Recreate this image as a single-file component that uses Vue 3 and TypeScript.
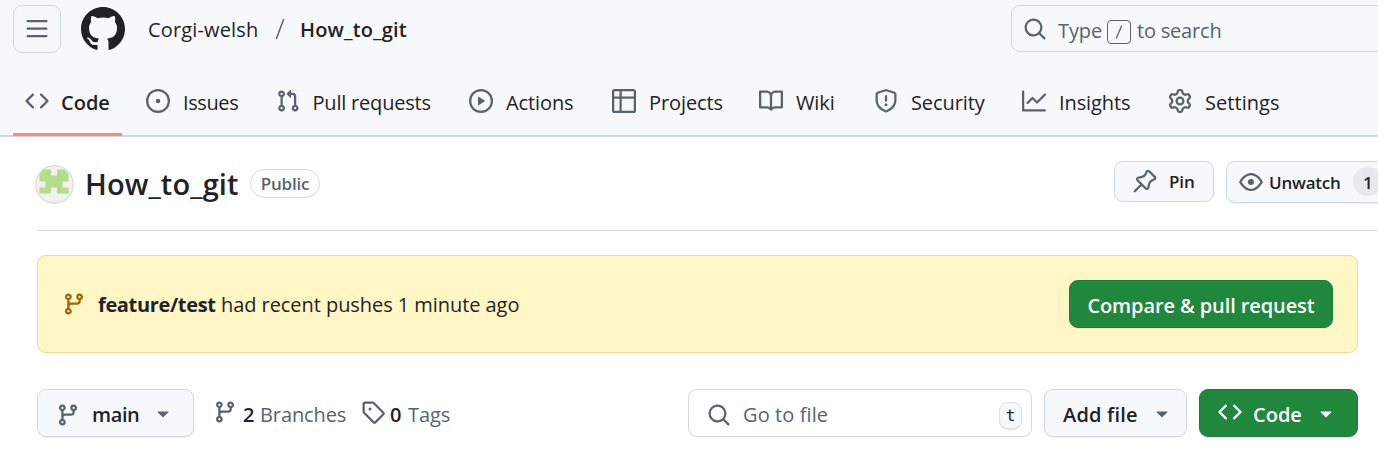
<script setup lang="ts">
interface Tab {
  label: string
  icon: string
  active?: boolean
}

const icons: Record<string, string> = {
  code: 'M4.72 3.22a.75.75 0 0 1 1.06 1.06L2.06 8l3.72 3.72a.75.75 0 1 1-1.06 1.06L.47 8.53a.75.75 0 0 1 0-1.06Zm6.56 0a.75.75 0 1 0-1.06 1.06L13.94 8l-3.72 3.72a.75.75 0 1 0 1.06 1.06l4.25-4.25a.75.75 0 0 0 0-1.06Z',
  issue: 'M8 9.5a1.5 1.5 0 1 0 0-3 1.5 1.5 0 0 0 0 3Z M8 0a8 8 0 1 1 0 16A8 8 0 0 1 8 0ZM1.5 8a6.5 6.5 0 1 0 13 0 6.5 6.5 0 0 0-13 0Z',
  pull: 'M1.5 3.25a2.25 2.25 0 1 1 3 2.122v5.256a2.251 2.251 0 1 1-1.5 0V5.372A2.25 2.25 0 0 1 1.5 3.25Zm5.677-.177L9.573.677A.25.25 0 0 1 10 .854V2.5h1A2.5 2.5 0 0 1 13.5 5v5.628a2.251 2.251 0 1 1-1.5 0V5a1 1 0 0 0-1-1h-1v1.646a.25.25 0 0 1-.427.177L7.177 3.427a.25.25 0 0 1 0-.354ZM3.75 2.5a.75.75 0 1 0 0 1.5.75.75 0 0 0 0-1.5Zm0 9.5a.75.75 0 1 0 0 1.5.75.75 0 0 0 0-1.5Zm8.25.75a.75.75 0 1 0 1.5 0 .75.75 0 0 0-1.5 0Z',
  play: 'M8 0a8 8 0 1 1 0 16A8 8 0 0 1 8 0ZM1.5 8a6.5 6.5 0 1 0 13 0 6.5 6.5 0 0 0-13 0Zm4.879-2.773 4.264 2.559a.25.25 0 0 1 0 .428l-4.264 2.559A.25.25 0 0 1 6 10.559V5.442a.25.25 0 0 1 .379-.215Z',
  table: 'M0 1.75C0 .784.784 0 1.75 0h12.5C15.216 0 16 .784 16 1.75v12.5A1.75 1.75 0 0 1 14.25 16H1.75A1.75 1.75 0 0 1 0 14.25ZM6.5 6.5v8h7.75a.25.25 0 0 0 .25-.25V6.5Zm8-1.5V1.75a.25.25 0 0 0-.25-.25H6.5V5Zm-13 1.5v7.75c0 .138.112.25.25.25H5v-8ZM5 5V1.5H1.75a.25.25 0 0 0-.25.25V5Z',
  book: 'M0 1.75A.75.75 0 0 1 .75 1h4.253c1.227 0 2.317.59 3 1.501A3.743 3.743 0 0 1 11.006 1h4.245a.75.75 0 0 1 .75.75v10.5a.75.75 0 0 1-.75.75h-4.507a2.25 2.25 0 0 0-1.591.659l-.622.621a.75.75 0 0 1-1.06 0l-.622-.621A2.25 2.25 0 0 0 5.258 13H.75a.75.75 0 0 1-.75-.75Zm7.251 10.324.004-5.073-.002-2.253A2.25 2.25 0 0 0 5.003 2.5H1.5v9h3.757a3.75 3.75 0 0 1 1.994.574ZM8.755 4.75l-.004 7.322a3.752 3.752 0 0 1 1.992-.572H14.5v-9h-3.495a2.25 2.25 0 0 0-2.25 2.25Z',
  shield: 'M7.467.133a1.748 1.748 0 0 1 1.066 0l5.25 1.68A1.75 1.75 0 0 1 15 3.48V7c0 1.566-.32 3.182-1.303 4.682-.983 1.498-2.585 2.813-5.032 3.855a1.697 1.697 0 0 1-1.33 0c-2.447-1.042-4.049-2.357-5.032-3.855C1.32 10.182 1 8.566 1 7V3.48a1.75 1.75 0 0 1 1.217-1.667Zm.61 1.429a.25.25 0 0 0-.153 0l-5.25 1.68a.25.25 0 0 0-.174.238V7c0 1.358.275 2.666 1.057 3.86.784 1.194 2.121 2.34 4.366 3.297a.196.196 0 0 0 .154 0c2.245-.956 3.582-2.104 4.366-3.298C13.225 9.666 13.5 8.36 13.5 7V3.48a.251.251 0 0 0-.174-.237l-5.25-1.68ZM8.75 4.75v3a.75.75 0 0 1-1.5 0v-3a.75.75 0 0 1 1.5 0ZM9 10.5a1 1 0 1 1-2 0 1 1 0 0 1 2 0Z',
  graph: 'M1.5 1.75V13.5h13.75a.75.75 0 0 1 0 1.5H.75a.75.75 0 0 1-.75-.75V1.75a.75.75 0 0 1 1.5 0Zm14.28 2.53-5.25 5.25a.75.75 0 0 1-1.06 0L7 7.06 4.28 9.78a.751.751 0 0 1-1.042-.018.751.751 0 0 1-.018-1.042l3.25-3.25a.75.75 0 0 1 1.06 0L10 7.94l4.72-4.72a.751.751 0 0 1 1.042.018.751.751 0 0 1 .018 1.042Z',
  gear: 'M8 0a8.2 8.2 0 0 1 .701.031C9.444.095 9.99.645 10.16 1.29l.288 1.107c.018.066.079.158.212.224.231.114.454.243.668.386.123.082.233.09.299.071l1.103-.303c.644-.176 1.392.021 1.82.63.27.385.506.792.704 1.218.315.675.111 1.422-.364 1.891l-.814.806c-.049.048-.098.147-.088.294.016.257.016.515 0 .772-.01.147.038.246.088.294l.814.806c.475.469.679 1.216.364 1.891a7.977 7.977 0 0 1-.704 1.217c-.428.61-1.176.807-1.82.63l-1.102-.302c-.067-.019-.177-.011-.3.071a5.909 5.909 0 0 1-.668.386c-.133.066-.194.158-.211.224l-.29 1.106c-.168.646-.715 1.196-1.458 1.26a8.006 8.006 0 0 1-1.402 0c-.743-.064-1.289-.614-1.458-1.26l-.289-1.106c-.018-.066-.079-.158-.212-.224a5.738 5.738 0 0 1-.668-.386c-.123-.082-.233-.09-.299-.071l-1.103.303c-.644.176-1.392-.021-1.82-.63a8.12 8.12 0 0 1-.704-1.218c-.315-.675-.111-1.422.363-1.891l.815-.806c.05-.048.098-.147.088-.294a6.214 6.214 0 0 1 0-.772c.01-.147-.038-.246-.088-.294l-.815-.806C.635 6.045.431 5.298.746 4.623a7.92 7.92 0 0 1 .704-1.217c.428-.61 1.176-.807 1.82-.63l1.102.302c.067.019.177.011.3-.071.214-.143.437-.272.668-.386.133-.066.194-.158.211-.224l.29-1.106C6.009.645 6.556.095 7.299.03 7.53.01 7.764 0 8 0Zm-.571 1.525c-.036.003-.108.036-.137.146l-.289 1.105c-.147.561-.549.967-.998 1.189-.173.086-.34.183-.5.29-.417.278-.97.423-1.529.27l-1.103-.303c-.109-.03-.175.016-.195.045-.22.312-.412.644-.573.99-.014.031-.021.11.059.19l.815.806c.411.406.562.957.53 1.456a4.709 4.709 0 0 0 0 .582c.032.499-.119 1.05-.53 1.456l-.815.806c-.081.08-.073.159-.059.19.162.346.353.677.573.989.02.03.085.076.195.046l1.102-.303c.56-.153 1.113-.008 1.53.27.161.107.328.204.501.29.447.222.85.629.997 1.189l.289 1.105c.029.109.101.143.137.146a6.6 6.6 0 0 0 1.142 0c.036-.003.108-.036.137-.146l.289-1.105c.147-.561.549-.967.998-1.189.173-.086.34-.183.5-.29.417-.278.97-.423 1.529-.27l1.103.303c.109.029.175-.016.195-.045.22-.313.411-.644.573-.99.014-.031.021-.11-.059-.19l-.815-.806c-.411-.406-.562-.957-.53-1.456a4.709 4.709 0 0 0 0-.582c-.032-.499.119-1.05.53-1.456l.815-.806c.081-.08.073-.159.059-.19a6.464 6.464 0 0 0-.573-.989c-.02-.03-.085-.076-.195-.046l-1.102.303c-.56.153-1.113.008-1.53-.27a4.44 4.44 0 0 0-.501-.29c-.447-.222-.85-.629-.997-1.189l-.289-1.105c-.029-.11-.101-.143-.137-.146a6.6 6.6 0 0 0-1.142 0ZM11 8a3 3 0 1 1-6 0 3 3 0 0 1 6 0ZM9.5 8a1.5 1.5 0 1 0-3.001.001A1.5 1.5 0 0 0 9.5 8Z',
  search: 'M10.68 11.74a6 6 0 0 1-7.922-8.982 6 6 0 0 1 8.982 7.922l3.04 3.04a.749.749 0 0 1-.326 1.275.749.749 0 0 1-.734-.215ZM11.5 7a4.499 4.499 0 1 0-8.997 0A4.499 4.499 0 0 0 11.5 7Z',
  menu: 'M1 2.75A.75.75 0 0 1 1.75 2h12.5a.75.75 0 0 1 0 1.5H1.75A.75.75 0 0 1 1 2.75Zm0 5A.75.75 0 0 1 1.75 7h12.5a.75.75 0 0 1 0 1.5H1.75A.75.75 0 0 1 1 7.75ZM1.75 12h12.5a.75.75 0 0 1 0 1.5H1.75a.75.75 0 0 1 0-1.5Z',
  mark: 'M8 0c4.42 0 8 3.58 8 8a8.013 8.013 0 0 1-5.45 7.59c-.4.08-.55-.17-.55-.38 0-.27.01-1.13.01-2.2 0-.75-.25-1.23-.54-1.48 1.78-.2 3.65-.88 3.65-3.95 0-.88-.31-1.59-.82-2.15.08-.2.36-1.02-.08-2.12 0 0-.67-.22-2.2.82-.64-.18-1.32-.27-2-.27-.68 0-1.36.09-2 .27-1.53-1.03-2.2-.82-2.2-.82-.44 1.1-.16 1.92-.08 2.12-.51.56-.82 1.28-.82 2.15 0 3.06 1.86 3.75 3.64 3.95-.23.2-.44.55-.51 1.07-.46.21-1.61.55-2.33-.66-.15-.24-.6-.83-1.23-.82-.67.01-.27.38.01.53.34.19.73.9.82 1.13.16.45.68 1.31 2.69.94 0 .67.01 1.3.01 1.49 0 .21-.15.45-.55.38A7.995 7.995 0 0 1 0 8c0-4.42 3.58-8 8-8Z',
  branch: 'M9.5 3.25a2.25 2.25 0 1 1 3 2.122V6A2.5 2.5 0 0 1 10 8.5H6a1 1 0 0 0-1 1v1.128a2.251 2.251 0 1 1-1.5 0V5.372a2.25 2.25 0 1 1 1.5 0v1.836A2.493 2.493 0 0 1 6 7h4a1 1 0 0 0 1-1v-.628A2.25 2.25 0 0 1 9.5 3.25Zm-6 0a.75.75 0 1 0 1.5 0 .75.75 0 0 0-1.5 0Zm8.25-.75a.75.75 0 1 0 0 1.5.75.75 0 0 0 0-1.5ZM4.25 12a.75.75 0 1 0 0 1.5.75.75 0 0 0 0-1.5Z',
  tag: 'M1 7.775V2.75C1 1.784 1.784 1 2.75 1h5.025c.464 0 .91.184 1.238.513l6.25 6.25a1.75 1.75 0 0 1 0 2.474l-5.026 5.026a1.75 1.75 0 0 1-2.474 0l-6.25-6.25A1.752 1.752 0 0 1 1 7.775Zm1.5 0c0 .066.026.13.073.177l6.25 6.25a.25.25 0 0 0 .354 0l5.025-5.025a.25.25 0 0 0 0-.354l-6.25-6.25a.25.25 0 0 0-.177-.073H2.75a.25.25 0 0 0-.25.25ZM6 5a1 1 0 1 1 0 2 1 1 0 0 1 0-2Z',
  eye: 'M8 2c1.981 0 3.671.992 4.933 2.078 1.27 1.091 2.187 2.345 2.637 3.023a1.62 1.62 0 0 1 0 1.798c-.45.678-1.367 1.932-2.637 3.023C11.67 13.008 9.981 14 8 14c-1.981 0-3.671-.992-4.933-2.078C1.797 10.83.88 9.576.43 8.898a1.62 1.62 0 0 1 0-1.798c.45-.677 1.367-1.931 2.637-3.022C4.33 2.992 6.019 2 8 2ZM1.679 7.932a.12.12 0 0 0 0 .136c.411.622 1.241 1.75 2.366 2.717C5.176 11.758 6.527 12.5 8 12.5c1.473 0 2.825-.742 3.955-1.715 1.124-.967 1.954-2.096 2.366-2.717a.12.12 0 0 0 0-.136c-.412-.621-1.242-1.75-2.366-2.717C10.824 4.242 9.473 3.5 8 3.5c-1.473 0-2.825.742-3.955 1.715-1.124.967-1.954 2.096-2.366 2.717ZM8 10a2 2 0 1 1-.001-3.999A2 2 0 0 1 8 10Z',
  pin: 'm11.294.984 3.722 3.722a1.75 1.75 0 0 1-.504 2.826l-1.327.613a3.089 3.089 0 0 0-1.707 2.084l-.584 2.454c-.317 1.332-1.972 1.8-2.94.832L5.75 11.311 1.78 15.28a.749.749 0 1 1-1.06-1.06l3.969-3.97-2.204-2.204c-.968-.968-.5-2.623.832-2.94l2.454-.584a3.08 3.08 0 0 0 2.084-1.707l.613-1.327a1.75 1.75 0 0 1 2.826-.504ZM6.283 9.723l2.732 2.731a.25.25 0 0 0 .42-.119l.584-2.454a4.586 4.586 0 0 1 2.537-3.098l1.328-.613a.25.25 0 0 0 .072-.404l-3.722-3.722a.25.25 0 0 0-.404.072l-.613 1.328a4.584 4.584 0 0 1-3.098 2.537l-2.454.584a.25.25 0 0 0-.119.42l2.731 2.732Z',
  caret: 'm4.427 7.427 3.396 3.396a.25.25 0 0 0 .354 0l3.396-3.396A.25.25 0 0 0 11.396 7H4.604a.25.25 0 0 0-.177.427Z',
}

const tabs: Tab[] = [
  { label: 'Code', icon: 'code', active: true },
  { label: 'Issues', icon: 'issue' },
  { label: 'Pull requests', icon: 'pull' },
  { label: 'Actions', icon: 'play' },
  { label: 'Projects', icon: 'table' },
  { label: 'Wiki', icon: 'book' },
  { label: 'Security', icon: 'shield' },
  { label: 'Insights', icon: 'graph' },
  { label: 'Settings', icon: 'gear' },
]
</script>

<template>
  <div class="page">
    <header class="header">
      <div class="topbar">
        <button class="menu"><svg class="icon" viewBox="0 0 16 16"><path :d="icons.menu" /></svg></button>
        <svg class="mark" viewBox="0 0 16 16"><path :d="icons.mark" /></svg>
        <div class="crumbs">
          <span class="owner">Corgi-welsh</span>
          <svg class="slash" viewBox="0 0 10 22"><path d="M8.7 1 1.3 21" /></svg>
          <span class="repo">How_to_git</span>
        </div>
        <div class="search">
          <svg class="icon" viewBox="0 0 16 16"><path :d="icons.search" /></svg>
          <span class="type">Type</span>
          <span class="key"><svg viewBox="0 0 8 14"><path d="M6.8.5 1.2 13.5" /></svg></span>
          <span class="hint">to search</span>
        </div>
      </div>
      <nav class="tabs">
        <a v-for="tab in tabs" :key="tab.label" class="tab" :class="{ active: tab.active }">
          <svg class="icon" viewBox="0 0 16 16"><path :d="icons[tab.icon]" /></svg>
          <span>{{ tab.label }}</span>
        </a>
      </nav>
    </header>

    <main>
      <section class="title-row">
        <svg class="avatar" viewBox="0 0 39 39">
          <circle cx="19.5" cy="19.5" r="18.8" fill="#f0f0f0" stroke="#dcdcde" stroke-width="1.2" />
          <path fill="#b6dc8a" d="M8 4.500H16v6h6v-6h7.500l4 5v7h-6v6h6v6H22v-6h-6v6H4.500v-6h6v-6h-6v-7Z" />
        </svg>
        <h1>How_to_git</h1>
        <span class="badge">Public</span>
        <button class="small pin"><svg class="icon" viewBox="0 0 16 16"><path :d="icons.pin" /></svg><span>Pin</span></button>
        <button class="small watch">
          <svg class="icon" viewBox="0 0 16 16"><path :d="icons.eye" /></svg>
          <span>Unwatch</span><span class="count">1</span>
        </button>
      </section>

      <section class="notice">
        <svg class="icon" viewBox="0 0 16 16"><path :d="icons.branch" /></svg>
        <p><strong>feature/test</strong><span>had recent pushes 1 minute ago</span></p>
        <button class="btn green compare"><span>Compare &amp; pull request</span></button>
      </section>

      <section class="tools">
        <button class="btn ref">
          <svg class="icon" viewBox="0 0 16 16"><path :d="icons.branch" /></svg>
          <span>main</span>
          <svg class="icon" viewBox="0 0 16 16"><path :d="icons.caret" /></svg>
        </button>
        <a class="stat branches"><svg class="icon" viewBox="0 0 16 16"><path :d="icons.branch" /></svg><b>2</b><span>Branches</span></a>
        <a class="stat tags"><svg class="icon" viewBox="0 0 16 16"><path :d="icons.tag" /></svg><b>0</b><span>Tags</span></a>
        <div class="file">
          <svg class="icon" viewBox="0 0 16 16"><path :d="icons.search" /></svg>
          <span>Go to file</span>
          <kbd>t</kbd>
        </div>
        <button class="btn add"><span>Add file</span><svg class="icon" viewBox="0 0 16 16"><path :d="icons.caret" /></svg></button>
        <button class="btn green clone">
          <svg class="icon" viewBox="0 0 16 16"><path :d="icons.code" /></svg>
          <span>Code</span>
          <svg class="icon" viewBox="0 0 16 16"><path :d="icons.caret" /></svg>
        </button>
      </section>
    </main>
  </div>
</template>

<style>
body { margin: 0; overflow: hidden; background: #fff; }
</style>

<style scoped>
* { box-sizing: border-box; }
.page {
  width: 1378px;
  height: 454px;
  overflow: hidden;
  color: #1f2328;
  font: 20px/30px "Open Sans", "Noto Sans", sans-serif;
  letter-spacing: -0.1px;
  white-space: nowrap;
}
button { margin: 0; padding: 0; font: inherit; color: inherit; letter-spacing: inherit; text-align: left; }
.icon { width: 24px; height: 24px; flex: none; fill: #59636e; display: block; }

.header { height: 137px; background: #f6f8fa; border-bottom: 2px solid #d1d9e0; }
.topbar { display: flex; height: 59px; padding: 5px 0 0 13px; }
.menu {
  display: flex; align-items: center; justify-content: center; flex: none;
  width: 48px; height: 48px; border: 1px solid #d1d9e0; border-radius: 9px; background: transparent;
}
.mark { width: 44px; height: 44px; flex: none; margin: 2px 0 0 20px; fill: #1f2328; }
.crumbs { display: flex; flex: none; width: 886px; height: 48px; align-items: center; padding-left: 23px; }
.crumbs span { padding-top: 2px; }
.owner { width: 127px; letter-spacing: 0.15px; }
.slash { width: 10px; height: 22px; fill: none; stroke: #59636e; stroke-width: 1.5; }
.repo { margin-left: 15px; font-weight: 600; letter-spacing: 0.15px; }
.search {
  display: flex; align-items: center; flex: none; width: 400px; height: 47px; padding-left: 11px;
  border: 1px solid #d1d9e0; border-radius: 9px; color: #59636e;
}
.type { width: 49px; margin-left: 11px; padding-top: 4px; }
.hint { padding-top: 4px; letter-spacing: -0.2px; }
.key {
  display: flex; align-items: center; justify-content: center; width: 24px; height: 24px;
  margin: 6px 6px 0 0; border: 1px solid #59636e; border-radius: 4px;
}
.key svg { width: 8px; height: 14px; fill: none; stroke: #59636e; stroke-width: 1.3; }

.tabs {
  display: grid; height: 77px; padding-left: 13px;
  grid-template-columns: 121px 129.500px 193.500px 143px 147px 115px 148px 146px 140px;
}
.tab { display: flex; align-items: center; gap: 13px; height: 77px; padding: 10px 0 0 12px; }
.tab .icon { margin-bottom: 4px; }
.tab span { padding-top: 1px; }
.tab.active { gap: 12px; width: 109px; border-bottom: 3px solid #fd8c73; padding-top: 13px; font-weight: 600; letter-spacing: 0; }
.tab:nth-child(2) { letter-spacing: -0.4px; }
.tab:nth-child(3) { letter-spacing: -0.2px; }
.tab:nth-child(9) { letter-spacing: 0.05px; }

.title-row { display: flex; align-items: center; height: 94px; margin-left: 37px; border-bottom: 1px solid #d1d9e0; }
.avatar { width: 39px; height: 39px; flex: none; margin: 1px 0 0 -2px; }
h1 { width: 166px; flex: none; margin: 0 0 0 11px; font-size: 29px; line-height: 42px; font-weight: 600; letter-spacing: 0.1px; }
.badge {
  width: 70px; height: 29px; flex: none; margin-left: -1px; border: 1px solid #d1d9e0; border-radius: 15px; text-align: center;
  color: #59636e; font-size: 17px; line-height: 27px; font-weight: 600; letter-spacing: -0.25px; margin-top: -1px;
}
.small {
  display: flex; align-items: center; height: 42px; border: 1px solid #d1d9e0; border-radius: 9px;
  background: #f6f8fa; font-size: 17px; font-weight: 600; flex: none;
}
.small span { padding-top: 2px; }
.pin { width: 100px; height: 41px; margin: -5px 0 0 794px; padding-left: 18px; gap: 12px; }
.watch { width: 220px; margin: -4px 0 0 12px; padding-left: 12px; box-shadow: 0 1px 1px rgba(31, 35, 40, 0.06); }
.watch span { margin-left: 6px; letter-spacing: -0.2px; }
.watch .count {
  width: 30px; height: 29px; margin-left: 12px; border-radius: 15px; background: #e6eaef;
  text-align: center; font-weight: 600; line-height: 27px;
}

.notice {
  display: flex; align-items: center; width: 1321px; height: 98px; margin: 24px 0 0 37px; padding: 0 24px;
  border: 1px solid #eedb8b; border-radius: 9px; background: #fff6c5;
}
.notice .icon { fill: #9a6700; }
.notice p { display: flex; margin: 2px auto 0 12px; }
.notice strong { width: 123px; font-weight: 700; letter-spacing: -0.35px; }
.notice p span { letter-spacing: -0.06px; }

.btn {
  display: flex; align-items: center; height: 48px; flex: none; border: 1px solid #d1d9e0; border-radius: 9px;
  background: #f6f8fa; font-weight: 600; box-shadow: 0 1px 1px rgba(31, 35, 40, 0.06);
}
.btn span { padding-top: 3px; }
.green { color: #fff; background: #1f883d; border-color: #1c7c38; }
.green .icon { fill: #fff; }
.compare { width: 264px; justify-content: center; }

.tools { display: flex; align-items: center; margin: 36px 0 0 37px; }
.ref { width: 157px; padding-left: 18px; }
.ref .icon:first-child { margin-top: 3px; }
.ref span { width: 59px; margin-left: 12px; letter-spacing: -0.4px; }
.stat { display: flex; align-items: center; flex: none; font-weight: 500; color: #59636e; }
.stat .icon { margin-bottom: 2px; }
.stat b, .stat span { padding-top: 3px; }
.stat b { width: 17px; color: #1f2328; font-weight: 600; }
.branches { width: 147px; margin-left: 19px; }
.branches b { margin-left: 6px; }
.tags { width: 327px; margin-left: 1px; }
.tags b { margin-left: 5px; }
.tags span { margin-left: 1px; }
.file {
  display: flex; align-items: center; flex: none; width: 344px; height: 48px; padding: 0 9px 0 18px;
  border: 1px solid #d1d9e0; border-radius: 9px; color: #59636e;
}
.file .icon { margin-top: 3px; }
.file span { margin: 0 auto 0 12px; padding-top: 3px; letter-spacing: 0.1px; }
kbd {
  width: 23px; height: 28px; border: 1px solid #dce2e8; border-bottom-width: 2px; border-radius: 9px;
  background: #f6f8fa; color: #1f2328; text-align: center; font: 16px/25px "DejaVu Sans Mono", monospace; margin-top: 5px;
}
.add { width: 143px; margin-left: 12px; padding-left: 18px; }
.add span { width: 87px; letter-spacing: 0.2px; }
.clone { width: 159px; margin-left: 12px; padding-left: 18px; }
.clone .icon:first-child { margin-bottom: 2px; }
.clone span { width: 61px; margin-left: 11px; letter-spacing: 0; }
</style>
